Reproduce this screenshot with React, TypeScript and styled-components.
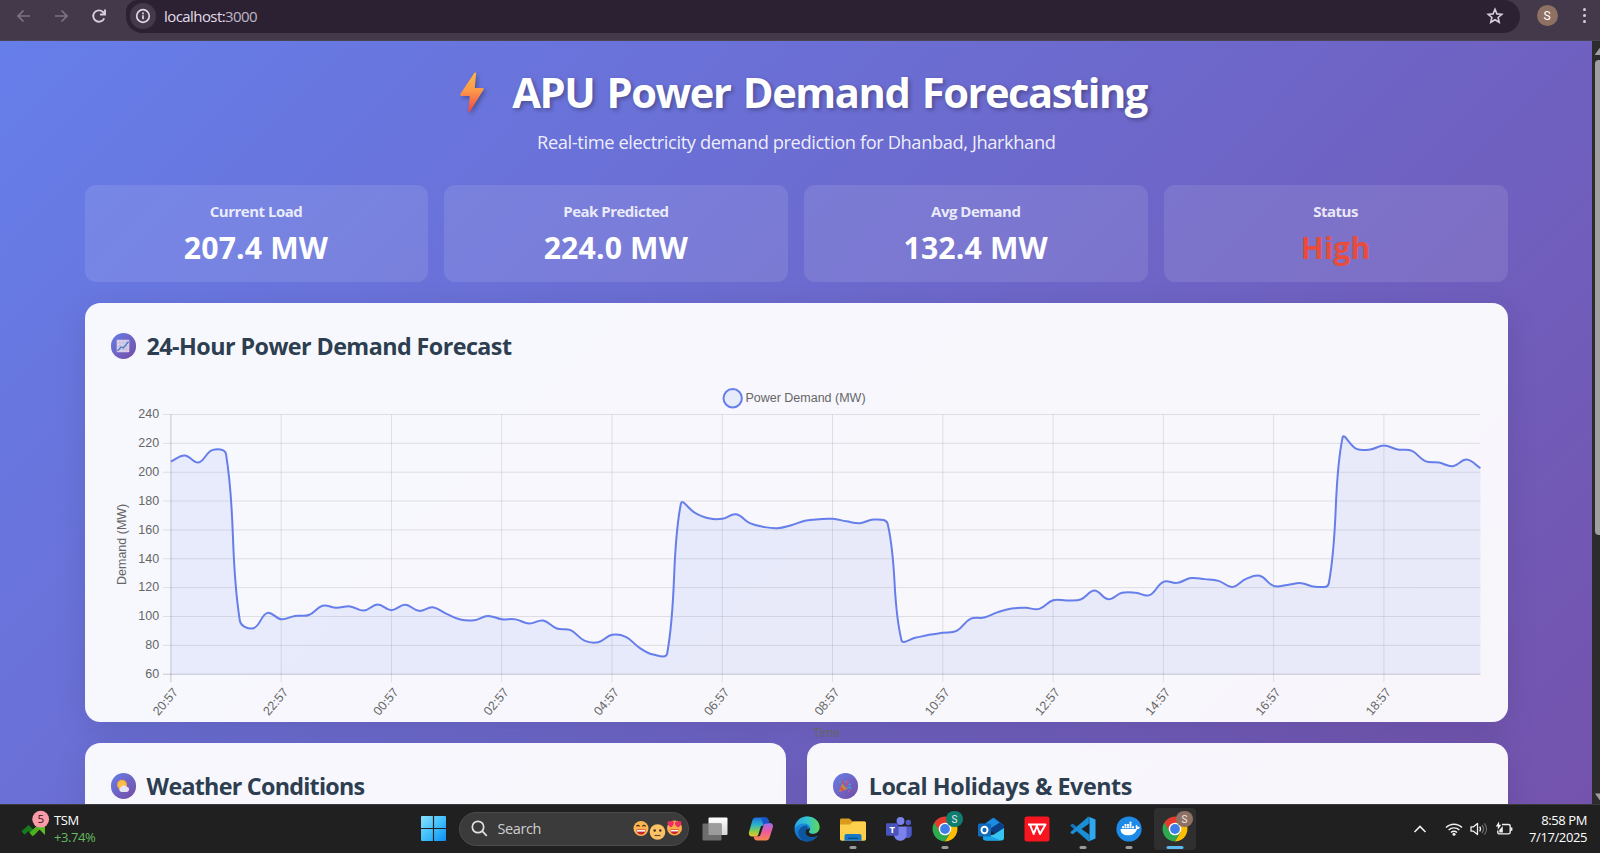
import React from "react";
import styled, { createGlobalStyle } from "styled-components";

const GlobalStyle = createGlobalStyle`
  *, *::before, *::after { box-sizing: border-box; }
  html, body { margin: 0; padding: 0; overflow: hidden; background: #202020; }
`;

const UI = `"Open Sans", "Noto Sans", sans-serif`;

const Screen = styled.div`
  width: 1600px;
  height: 853px;
  display: flex;
  flex-direction: column;
  overflow: hidden;
  font-family: ${UI};
`;

/* ---------- browser toolbar ---------- */

const Toolbar = styled.div`
  flex: none;
  height: 41px;
  display: flex;
  align-items: flex-start;
  background: #43394a;
  border-bottom: 1px solid #4b4552;
`;

const NavIcons = styled.div`
  width: 126px;
  height: 31px;
  padding-left: 13.5px;
  display: flex;
  align-items: center;
  gap: 17.5px;
`;

const AddressBar = styled.div`
  width: 1394px;
  height: 33px;
  padding: 0 15px 1px 4px;
  display: flex;
  align-items: center;
  background: #2b2133;
  border-radius: 12px 17px 17px 17px;
`;

const InfoBadge = styled.span`
  width: 26px;
  height: 26px;
  border-radius: 50%;
  display: grid;
  place-items: center;
  background: #43394a;
`;

const Url = styled.span`
  flex: 1;
  padding-left: 8px;
  font-size: 15px;
  letter-spacing: -0.57px;
  color: #e4dde8;
  span { color: #bfb6c4; }
`;

const Avatar = styled.span`
  width: 21px;
  height: 21px;
  margin: 5px 0 0 16.5px;
  border-radius: 50%;
  display: grid;
  place-items: center;
  background: #8f7164;
  color: #fff;
  font: 12px Roboto, sans-serif;
`;

const MenuDots = styled.span`
  margin: 8px 0 0 25px;
  display: flex;
  flex-direction: column;
  gap: 2.6px;
  i { width: 3.4px; height: 3.4px; border-radius: 50%; background: #d8ccdf; }
`;

/* ---------- page ---------- */

const Viewport = styled.div`
  flex: none;
  height: 762.5px;
  display: flex;
  overflow: hidden;
`;

const Page = styled.main`
  width: 1592px;
  height: 1180px;
  flex: none;
  padding: 0 84px 0 84.6px;
  background: linear-gradient(135deg, #667eea 0%, #764ba2 100%);
`;

const ScrollTrack = styled.div`
  flex: 1;
  padding: 6px 0 3px 3px;
  display: flex;
  flex-direction: column;
  background: #2c2c2c;
  overflow: hidden;
`;

const ScrollThumb = styled.div`
  width: 9px;
  height: 475px;
  margin: 5px 0 auto;
  border-radius: 4px;
  background: #9f9f9f;
`;

const Header = styled.header`
  height: 143.5px;
  padding-top: 22px;
  display: flex;
  flex-direction: column;
  align-items: center;
`;

const Title = styled.h1`
  margin: 0 0 0 14px;
  height: 57px;
  display: flex;
  align-items: center;
  gap: 28.5px;
  font-size: 41.67px;
  line-height: 57px;
  letter-spacing: -1.45px;
  word-spacing: 3px;
  font-weight: 700;
  color: #fff;
  white-space: nowrap;
  text-shadow: 2px 2px 4px rgba(0, 0, 0, 0.3);
  svg { margin-top: 2px; filter: drop-shadow(2px 2px 2px rgba(0, 0, 0, 0.3)); }
`;

const Subtitle = styled.p`
  margin: 9px 0 0;
  font-size: 18.3px;
  line-height: 25px;
  letter-spacing: -0.4px;
  color: rgba(255, 255, 255, 0.9);
  white-space: nowrap;
`;

const Stats = styled.section`
  display: grid;
  grid-template-columns: repeat(4, 1fr);
  gap: 16px;
`;

const StatCard = styled.div`
  height: 97.5px;
  padding: 15px 1px 0 0;
  border-radius: 11px;
  background: rgba(255, 255, 255, 0.1);
  text-align: center;
  white-space: nowrap;
`;

const StatLabel = styled.div`
  font-size: 15px;
  line-height: 22px;
  letter-spacing: -0.5px;
  font-weight: 700;
  color: rgba(255, 255, 255, 0.86);
`;

const StatValue = styled.div<{ $alert?: boolean }>`
  margin-top: 5px;
  font-size: 30.2px;
  line-height: 42px;
  letter-spacing: 0.15px;
  font-weight: 700;
  color: ${(p) => (p.$alert ? "#e74c3c" : "#fff")};
`;

const Card = styled.section<{ $height: number }>`
  height: ${(p) => p.$height}px;
  padding: 26px;
  border-radius: 15.5px;
  background: rgba(255, 255, 255, 0.95);
  box-shadow: 0 8px 32px rgba(0, 0, 0, 0.1);
`;

const ChartCard = styled(Card)`
  margin-top: 21px;
`;

const LowerRow = styled.div`
  margin-top: 21px;
  display: grid;
  grid-template-columns: 1fr 1fr;
  gap: 20.8px;
`;

const CardTitle = styled.h2<{ $tracking: number }>`
  margin: 0;
  height: 34px;
  display: flex;
  align-items: center;
  gap: 10.5px;
  font-size: 23.3px;
  line-height: 34px;
  letter-spacing: ${(p) => p.$tracking}px;
  font-weight: 700;
  color: #2c3e50;
  white-space: nowrap;
`;

const TitleIcon = styled.span`
  width: 25.5px;
  height: 25.5px;
  border-radius: 50%;
  display: grid;
  place-items: center;
  background: linear-gradient(135deg, #667eea, #764ba2);
`;

const ChartSvg = styled.svg`
  display: block;
  margin-left: -26px;
  overflow: visible;
  font-family: "Liberation Sans", Arial, sans-serif;
  font-size: 12.5px;
  fill: #666;
`;

/* ---------- chart ---------- */

const demand = [
  207.4, 211.6, 206.7, 215.3, 212.5, 97.2, 91.9, 102.5, 98.1, 100.4, 101, 107.4, 106, 107, 104.1, 108.3,
  104.4, 108.1, 103.9, 106.4, 101.8, 97.9, 97.4, 100.4, 98.1, 98, 95.1, 97.2, 91.7, 90.5, 83.3, 82.2,
  87.3, 85.9, 78.3, 73.6, 74.3, 178.3, 172, 168.1, 167.7, 170.9, 164.7, 162.1, 161.2, 163.3, 166.3, 167.4,
  167.7, 166, 164.7, 167.2, 164.2, 83.6, 85.2, 87.3, 88.7, 90, 98.4, 99.3, 103, 105.5, 106, 105.3,
  111.3, 111.1, 111.8, 118, 112, 116.4, 116.4, 114.8, 124, 123.3, 126.6, 125.9, 124.7, 120.5, 126.1, 128.2,
  121.2, 121.9, 123.1, 120.6, 122.9, 224, 216.2, 215.7, 218.5, 215.7, 215, 207.7, 206.7, 204.2, 208.8, 202.8,
];

const times = ["20:57", "22:57", "00:57", "02:57", "04:57", "06:57", "08:57", "10:57", "12:57", "14:57", "16:57", "18:57"];
const levels = [240, 220, 200, 180, 160, 140, 120, 100, 80, 60];

const plot = { left: 85.9, right: 1395.4, top: 51.5, bottom: 311.2 };
const step = (plot.right - plot.left) / (demand.length - 1);
const yOf = (v: number) => plot.top + ((240 - v) / 180) * (plot.bottom - plot.top);

function splinePath(values: number[], tension = 0.4) {
  const pts = values.map((v, i) => ({ x: plot.left + i * step, y: yOf(v) }));
  const ctrl = pts.map((p, i) => {
    const a = pts[Math.max(0, i - 1)];
    const b = pts[Math.min(pts.length - 1, i + 1)];
    const da = Math.hypot(p.x - a.x, p.y - a.y);
    const db = Math.hypot(b.x - p.x, b.y - p.y);
    const fa = (tension * da) / (da + db);
    const fb = (tension * db) / (da + db);
    return {
      inX: p.x - fa * (b.x - a.x),
      inY: p.y - fa * (b.y - a.y),
      outX: p.x + fb * (b.x - a.x),
      outY: p.y + fb * (b.y - a.y),
    };
  });
  return pts
    .map((p, i) =>
      i === 0
        ? `M${p.x},${p.y}`
        : `C${ctrl[i - 1].outX},${ctrl[i - 1].outY} ${ctrl[i].inX},${ctrl[i].inY} ${p.x},${p.y}`
    )
    .join(" ");
}

const DemandChart = () => {
  const line = splinePath(demand);
  return (
    <ChartSvg width="1423" height="350">
      <circle cx="647.7" cy="35.2" r="9.2" fill="#e6eafb" stroke="#667eea" strokeWidth="2" />
      <text x="660.4" y="39">Power Demand (MW)</text>
      {levels.map((v) => (
        <g key={v}>
          <line x1={plot.left - 8} x2={plot.right} y1={yOf(v)} y2={yOf(v)} stroke={v === 60 ? "rgba(0,0,0,.2)" : "rgba(0,0,0,.1)"} />
          <text x={plot.left - 11.8} y={yOf(v) + 3.8} textAnchor="end">{v}</text>
        </g>
      ))}
      {times.map((t, i) => {
        const x = plot.left + i * 8 * step;
        return (
          <g key={t}>
            <line x1={x} x2={x} y1={plot.top} y2={plot.bottom + 8} stroke={i === 0 ? "rgba(0,0,0,.2)" : "rgba(0,0,0,.1)"} />
            <text transform={`translate(${x + 7.7} ${plot.bottom + 18.2}) rotate(-50)`} textAnchor="end">{t}</text>
          </g>
        );
      })}
      <text transform={`translate(41.400 ${(plot.top + plot.bottom) / 2}) rotate(-90)`} textAnchor="middle">Demand (MW)</text>
      <path d={`${line} L${plot.right},${plot.bottom} L${plot.left},${plot.bottom} Z`} fill="rgba(102,126,234,.1)" />
      <path d={line} fill="none" stroke="#667eea" strokeWidth="2" strokeLinejoin="round" />
      <text x={(plot.left + plot.right) / 2 + 0.8} y="374" textAnchor="middle">Time</text>
    </ChartSvg>
  );
};

/* ---------- taskbar ---------- */

const Taskbar = styled.footer`
  flex: none;
  height: 49.5px;
  display: flex;
  align-items: center;
  background: #202020;
  border-top: 1px solid #3a3a3a;
  color: #fff;
`;

const StockWidget = styled.div`
  width: 412px;
  padding-left: 20px;
  display: flex;
  align-items: center;
  gap: 4px;
  svg { margin-top: -10px; }
`;

const StockText = styled.div`
  font-size: 13px;
  line-height: 16.7px;
  letter-spacing: -0.42px;
  white-space: nowrap;
  span { display: block; color: #62bd5c; }
`;

const StartButton = styled.div`
  width: 47px;
  display: grid;
  place-items: center;
  padding-right: 5px;
`;

const SearchBox = styled.div`
  width: 230px;
  height: 34px;
  padding: 0 5px 0 11px;
  display: flex;
  align-items: center;
  border: 1px solid #4b4b4b;
  border-radius: 17px;
  background: #3b3b3b;
  color: #cfcfcf;
  font-size: 14.5px;
  letter-spacing: -0.4px;
  svg:last-child { margin-left: auto; }
  span { padding-left: 9.5px; }
`;

const Apps = styled.div`
  display: flex;
  padding-left: 3px;
`;

const AppSlot = styled.div<{ $active?: boolean }>`
  position: relative;
  width: 42px;
  height: 42px;
  margin: 0 2.03px;
  border-radius: 4px;
  display: grid;
  place-items: center;
  background: ${(p) => (p.$active ? "#2f2f2f" : "transparent")};
`;

const RunMark = styled.i<{ $active?: boolean }>`
  position: absolute;
  left: 50%;
  bottom: 0.5px;
  width: ${(p) => (p.$active ? 17 : 7)}px;
  height: 3.4px;
  border-radius: 2px;
  transform: translateX(-50%);
  background: ${(p) => (p.$active ? "#5db8ee" : "#9a9a9a")};
`;

const ProfileBadge = styled.span<{ $color: string }>`
  position: absolute;
  top: 3px;
  right: 3.5px;
  width: 16.5px;
  height: 16.5px;
  border-radius: 50%;
  display: grid;
  place-items: center;
  background: ${(p) => p.$color};
  color: #e8e8e8;
  font: 10px Roboto, sans-serif;
`;

const Tray = styled.div`
  flex: 1;
  padding-right: 13px;
  display: flex;
  justify-content: flex-end;
  align-items: center;
`;

const TrayIcons = styled.div`
  display: flex;
  align-items: center;
  gap: 7px;
  padding-right: 16px;
  svg:first-child { margin-right: 11px; }
`;

const Clock = styled.div`
  width: 58px;
  font-size: 13px;
  line-height: 16.6px;
  letter-spacing: -0.4px;
  text-align: right;
  white-space: nowrap;
`;

const Icon = ({ children }: { children: React.ReactNode }) => (
  <svg width="26" height="26" viewBox="0 0 26 26">{children}</svg>
);

const TaskViewIcon = () => (
  <Icon>
    <defs><linearGradient id="tv" x2="0" y2="1"><stop stopColor="#fff" /><stop offset="1" stopColor="#d6d6d6" /></linearGradient></defs>
    <rect x="6.5" y="1.5" width="19" height="17.5" rx="1" fill="url(#tv)" />
    <rect x="0.5" y="7.5" width="19" height="17" rx="1" fill="#6d6d6d" />
    <rect x="6.5" y="7.5" width="13" height="11.5" fill="#9c9c9c" />
  </Icon>
);

const CopilotIcon = () => (
  <Icon>
    <defs>
      <linearGradient id="cpA" x2="0" y2="1"><stop stopColor="#1b6fe0" /><stop offset=".4" stopColor="#2fb5c8" /><stop offset=".75" stopColor="#8fce45" /><stop offset="1" stopColor="#f5c02c" /></linearGradient>
      <linearGradient id="cpB" x2="0" y2="1"><stop stopColor="#a06cf0" /><stop offset=".5" stopColor="#ee5a9c" /><stop offset="1" stopColor="#f7884c" /></linearGradient>
    </defs>
    <path d="M8 1.500h9.500c2 0 2.600 1.400 3.100 3.200l.8 2.800h-3.200c-1.500 0-2.300.8-2.700 2.200l-2.700 8.300c-.5 1.500-1.300 2.400-3 2.400H4c-2.600 0-3.600-2-3-4.500L4.300 4.500C4.900 2.500 6 1.500 8 1.500z" fill="url(#cpA)" />
    <path d="M18 24.500H9.200c-2 0-2.800-1-3.300-2.800l-.5-1.500h4.300c1.700 0 2.600-1 3.100-2.500L15.500 9c.4-1.200 1.200-2 2.700-2h3.600c2.600 0 3.600 2 3 4.500l-3.200 10c-.6 2-1.700 3-3.600 3z" fill="url(#cpB)" />
    <path d="M17 1.500c2.300 0 3 1.300 3.600 3.200l.8 2.800h-3.200c-1.400 0-2.200.7-2.600 1.900L13.500 2.800c-.3-.8-.8-1.300-1.500-1.300z" fill="#1c53c9" />
    <path d="M10.300 18.500 13 10l2.500-.5-3.200 9.500c-.3.700-.7 1-1.500 1.200H9c.6-.3 1-.9 1.300-1.700z" fill="#202020" />
  </Icon>
);

const EdgeIcon = () => (
  <Icon>
    <defs>
      <linearGradient id="edA" x2="1"><stop stopColor="#2aa4e8" /><stop offset=".55" stopColor="#35c6c9" /><stop offset="1" stopColor="#63d84f" /></linearGradient>
      <linearGradient id="edB" x2="0" y2="1"><stop stopColor="#1c9be8" /><stop offset="1" stopColor="#1366c2" /></linearGradient>
    </defs>
    <path d="M.5 13C.5 6 6 .5 13 .5S25.500 5 25.500 11c0 4-3 6.700-6.300 6.700-3 0-4.200-1-4.200-1.900 0-.8 1.200-1.200 1.200-3.200l-3 .2c-1.700 1-2.200 2.600-1.700 4.500.8 3 4 4.300 7.300 4 1.900-.1 3.600-.8 5-1.700C21.700 23.300 17.700 25.500 13 25.500 6 25.500.5 20 .5 13z" fill="url(#edB)" />
    <path d="M.6 12.200C1.200 5.500 6.500.5 13 .5c7 0 12.500 4.800 12.500 10.800 0 4-2.900 6.400-6.300 6.400-3 0-4.200-1-4.200-1.900 0-.8 1.200-1.200 1.200-3.200 0-2.700-2.500-5-6-5-4.200 0-7.700 1.800-9.600 4.600z" fill="url(#edA)" />
    <path d="M12 9.500c-4 .2-7.300 3-7.600 7 .1 4.600 4 9 8.600 9 4.700 0 8.500-2.200 10.800-5.700-1.400.9-3.100 1.600-5 1.700-3.300.3-6.500-1-7.300-4-.6-2.300.2-4 1.900-5 .6-1.400.2-2.800-1.400-3z" fill="#0d559f" />
  </Icon>
);

const FolderIcon = () => (
  <Icon>
    <path d="M0 4c0-1 .7-1.600 1.600-1.600h7c.8 0 1.200.3 1.700.8L12.500 5.500H24c1.200 0 2 .8 2 1.800V12H0z" fill="#d99a1d" />
    <path d="M0 8.500h9c1 0 1.400-.4 2-1l1.200-1.300c.4-.4.8-.7 1.500-.7H24.300c1 0 1.700.7 1.700 1.600V23c0 1-.7 1.700-1.700 1.700H1.700C.7 24.700 0 24 0 23z" fill="#fccf4d" />
    <path d="M4.500 24.700V20c0-1.200.8-2 2-2h13c1.200 0 2 .8 2 2v4.700z" fill="#1679c8" />
    <path d="M8 22.300h10" stroke="#0b4b8a" strokeWidth="1.300" />
  </Icon>
);

const TeamsIcon = () => (
  <Icon>
    <circle cx="22.300" cy="6.500" r="2.700" fill="#5059c9" />
    <circle cx="14.500" cy="5" r="3.900" fill="#7b83eb" />
    <path d="M19.500 10.500h6.200v7.200c0 2.500-1.600 4.300-4 4.300h-2.200z" fill="#5059c9" />
    <path d="M8 10.500h12.500v8c0 3.800-2.600 6.300-6.200 6.300S8 22.300 8 18.500z" fill="#7b83eb" />
    <rect x="0" y="7.300" width="12.500" height="12.500" rx="1.200" fill="#4b53bc" />
    <text x="6.200" y="17" textAnchor="middle" fill="#fff" fontSize="9.500" fontWeight="700" fontFamily="Open Sans">T</text>
  </Icon>
);

const ChromeIcon = () => (
  <Icon>
    <path d="M13 13 2.200 6.800A12.500 12.500 0 0 1 23.800 6.800H13z" fill="#e33b2e" />
    <path d="M13 13 2.200 6.750A12.500 12.500 0 0 0 13 25.500l5.400-9.400z" fill="#2da94f" />
    <path d="M13 25.500A12.500 12.500 0 0 0 23.800 6.750H13l5.400 9.400z" fill="#fdbd00" />
    <path d="M2.200 6.750 7.600 16.100 13 6.750z" fill="#e33b2e" />
    <path d="M7.600 16.100 2.200 6.750l-.6 3z" fill="#2da94f" />
    <circle cx="13" cy="13" r="6.300" fill="#fff" />
    <circle cx="13" cy="13" r="4.900" fill="#3f7de8" />
  </Icon>
);

const OutlookIcon = () => (
  <Icon>
    <path d="M4.500 9.500 14.500 2c.7-.5 1.300-.5 2 0l9.500 7.500V15H4.500z" fill="#1066b5" />
    <path d="M8 7 15.500 2l6 4.700-9.500 6z" fill="#1c8be0" />
    <path d="m12 13 9.500-6.300L26 10v3l-9 5.500z" fill="#0a3f86" />
    <path d="M26 12v10c0 1.500-1 2.500-2.500 2.500H8L5 20.500l11-2z" fill="#36c5f0" />
    <path d="m5 16.500 17.500 8H7c-1.300 0-2-.8-2-2z" fill="#1ba1e8" />
    <rect x="0" y="7.500" width="13" height="13" rx="1.500" fill="#0f6cbd" />
    <ellipse cx="6.500" cy="14" rx="3" ry="3.300" fill="none" stroke="#fff" strokeWidth="1.900" />
  </Icon>
);

const WpsIcon = () => (
  <Icon>
    <rect x=".5" y=".5" width="25" height="25" rx="2.500" fill="#f9151f" />
    <path d="M4 8.500h14.500M6 8.500l3.700 9.500L13 9.500M12.500 9l3.500 9 5.500-9.500H18.500" fill="none" stroke="#fff" strokeWidth="2" strokeLinejoin="round" />
  </Icon>
);

const CodeIcon = () => (
  <Icon>
    <path d="M19 .6 7.300 11.300 2.700 7.800.5 9v1l17.800 15.200z" fill="#1277bd" />
    <path d="M19 25.400 7.300 14.700l-4.600 3.500L.5 17v-1L18.300.8z" fill="#1b8fd6" />
    <path d="M18.300.4 25.500 3.500v19l-7.200 3.100c-.5 0-.8-.2-1-.5.8.7 2 .2 2-1V1.900c0-1.200-1.200-1.700-2-1z" fill="#2fa8f0" />
    <path d="M19.300 7.500v11L11.500 13z" fill="#202020" />
  </Icon>
);

const DockerIcon = () => (
  <Icon>
    <circle cx="13" cy="13" r="12.600" fill="#1d8ae8" />
    <path d="M4.500 13h14c.9 0 1.500-.4 1.500-1.300-.6-.8-.5-2 .2-3 .9.600 1.300 1.300 1.400 2.200.8-.1 1.600 0 2.300.5-.5 1.200-1.500 1.600-2.800 1.600-1.500 4.300-4.500 6.300-9 6.300-5 0-7.400-2.300-7.600-6.300z" fill="#fff" />
    <path d="M6 10.300h2v2H6zM8.500 10.300h2v2h-2zM11 10.300h2v2h-2zM13.500 10.300h2v2h-2zM16 10.300h2v2h-2zM8.500 8h2v2h-2zM11 8h2v2h-2zM13.500 8h2v2h-2zM13.500 5.700h2v2h-2z" fill="#fff" />
  </Icon>
);

const SearchEmojis = () => (
  <svg width="50" height="24" viewBox="0 0 50 24">
    <circle cx="8" cy="11.500" r="7.500" fill="#fdb64f" />
    <path d="M3.500 12.500h9c0 3.500-1.800 5-4.500 5s-4.500-1.500-4.500-5z" fill="#c5222f" />
    <path d="M4 13h8v1.600H4z" fill="#fff" />
    <path d="M3.500 9.500c.7-1.400 2.300-1.400 3 0M9.500 9.500c.7-1.400 2.300-1.400 3 0" fill="none" stroke="#4b2e1a" strokeWidth="1.200" />
    <circle cx="24.500" cy="15" r="7.800" fill="#fcc266" />
    <circle cx="21.700" cy="13.500" r="1.200" fill="#3f3028" /><circle cx="27.300" cy="13.500" r="1.200" fill="#3f3028" />
    <path d="M21.500 18.500h6" stroke="#6b4a32" strokeWidth="1.200" />
    <circle cx="41.500" cy="11" r="7.500" fill="#fdae4c" />
    <path d="M37.500 12.500h8c0 3-1.600 4.500-4 4.500s-4-1.500-4-4.500z" fill="#c5222f" />
    <path d="M38 13h7v1.400h-7z" fill="#fff" />
    <path d="M38 10.500c-3-1.700-4.300-4-3.300-5.700.8-1.200 2.300-1 2.900.2.900-1.200 2.500-1.200 3.100.1.600 1.900-.6 3.900-2.700 5.400zM45 10.500c-2.500-1.600-3.500-3.500-2.900-5.300.6-1.300 2.100-1.300 2.900-.1.800-1.300 2.500-1.400 3.200-.1.800 1.900-.6 4-3.200 5.500z" fill="#ee2d63" />
  </svg>
);

const apps: { key: string; icon: React.ReactNode; running?: boolean; active?: boolean; badge?: string }[] = [
  { key: "tasks", icon: <TaskViewIcon /> },
  { key: "copilot", icon: <CopilotIcon /> },
  { key: "edge", icon: <EdgeIcon /> },
  { key: "files", icon: <FolderIcon />, running: true },
  { key: "teams", icon: <TeamsIcon /> },
  { key: "chrome", icon: <ChromeIcon />, running: true, badge: "#0f7d70" },
  { key: "outlook", icon: <OutlookIcon /> },
  { key: "wps", icon: <WpsIcon /> },
  { key: "code", icon: <CodeIcon />, running: true },
  { key: "docker", icon: <DockerIcon />, running: true },
  { key: "chrome-active", icon: <ChromeIcon />, running: true, active: true, badge: "#8f7164" },
];

export default function App() {
  return (
    <Screen>
      <GlobalStyle />
      <Toolbar>
        <NavIcons>
          <svg width="20" height="20" viewBox="0 0 20 20" fill="none" stroke="#7d7385" strokeWidth="1.700"><path d="M16 10H4.500M9.500 4.500 4 10l5.500 5.500" /></svg>
          <svg width="20" height="20" viewBox="0 0 20 20" fill="none" stroke="#7d7385" strokeWidth="1.700"><path d="M4 10h11.500M10.500 4.500 16 10l-5.500 5.500" /></svg>
          <svg width="20" height="20" viewBox="0 0 20 20" fill="none" stroke="#d8ccdf" strokeWidth="1.900"><path d="M15.200 12.300A5.700 5.700 0 1 1 14 6l1.500 1.600" /><path d="M16 3.500v5h-5" /></svg>
        </NavIcons>
        <AddressBar>
          <InfoBadge>
            <svg width="16" height="16" viewBox="0 0 16 16" fill="none" stroke="#e0d6e6" strokeWidth="1.700"><circle cx="8" cy="8" r="6.300" /><path d="M8 7.200V11.300M8 4.600v1.700" /></svg>
          </InfoBadge>
          <Url>localhost:<span>3000</span></Url>
          <svg width="20" height="20" viewBox="0 0 20 20" fill="none" stroke="#d8ccdf" strokeWidth="1.600"><path d="m10 3.300 1.900 4.600 4.900.4-3.700 3.200 1.100 4.800L10 13.700l-4.200 2.600 1.100-4.800-3.700-3.200 4.900-.4z" /></svg>
        </AddressBar>
        <Avatar>S</Avatar>
        <MenuDots><i /><i /><i /></MenuDots>
      </Toolbar>

      <Viewport>
        <Page>
          <Header>
            <Title>
              <svg width="24" height="41" viewBox="0 0 24 41">
                <defs><linearGradient id="bolt" x2="0" y2="1"><stop stopColor="#fcb643" /><stop offset=".45" stopColor="#fb9a4a" /><stop offset="1" stopColor="#ef4444" /></linearGradient></defs>
                <path d="M14.500.8c.8-.8 1.800-.3 1.600.8L14.800 16h7.700c1.200 0 1.600.9 1 1.800L9.800 39.800c-.6.900-1.600.6-1.500-.5L9.800 24H1.300C.2 24-.2 23 .3 22.100z" fill="url(#bolt)" />
              </svg>
              APU Power Demand Forecasting
            </Title>
            <Subtitle>Real-time electricity demand prediction for Dhanbad, Jharkhand</Subtitle>
          </Header>

          <Stats>
            <StatCard><StatLabel>Current Load</StatLabel><StatValue>207.4 MW</StatValue></StatCard>
            <StatCard><StatLabel>Peak Predicted</StatLabel><StatValue>224.0 MW</StatValue></StatCard>
            <StatCard><StatLabel>Avg Demand</StatLabel><StatValue>132.4 MW</StatValue></StatCard>
            <StatCard><StatLabel>Status</StatLabel><StatValue $alert>High</StatValue></StatCard>
          </Stats>

          <ChartCard $height={418.9}>
            <CardTitle $tracking={-0.56}>
              <TitleIcon>
                <svg width="14" height="14" viewBox="0 0 14 14"><rect x=".7" y=".7" width="12.600" height="12.600" rx="1" fill="#dcd3ea" /><path d="M4 1v12M7.200 1v12M10.400 1v12M1 4h12M1 7.200h12M1 10.400h12" stroke="#bfb4dc" strokeWidth=".7" /><path d="m1.500 12 3.500-4 2.500 1L12.500 2.500" fill="none" stroke="#4a7fc4" strokeWidth="1.300" /></svg>
              </TitleIcon>
              24-Hour Power Demand Forecast
            </CardTitle>
            <DemandChart />
          </ChartCard>

          <LowerRow>
            <Card $height={300}>
              <CardTitle $tracking={-0.74}>
                <TitleIcon>
                  <svg width="14" height="14" viewBox="0 0 14 14"><circle cx="6" cy="5.800" r="5" fill="#f9a63a" /><circle cx="6" cy="5.800" r="3.700" fill="#fcbf4b" /><path d="M5.500 13a2.600 2.600 0 0 1-.3-5.100 3.200 3.200 0 0 1 5.600-.2A2.700 2.700 0 0 1 11 13z" fill="#e8e3f2" /></svg>
                </TitleIcon>
                Weather Conditions
              </CardTitle>
            </Card>
            <Card $height={300}>
              <CardTitle $tracking={-0.45}>
                <TitleIcon>
                  <svg width="14" height="14" viewBox="0 0 14 14"><path d="m1 13 3-8.500L9.500 10z" fill="#c58a3c" /><path d="m2 10.300 1-2.600 3.400 3.500-2 .7z" fill="#dd4a5b" /><path d="M5 5c1-1.500.5-2.800-.5-4M8 7c1-2.500 1-4 2.500-5.500" fill="none" stroke="#e0486c" strokeWidth="1.200" /><path d="M9 9c1.500-1 3-.5 4.300.5M7.500 3.500l.5-2" fill="none" stroke="#36a8e0" strokeWidth="1.200" /><circle cx="11.500" cy="5.500" r=".9" fill="#35b6e8" /><circle cx="2" cy="3" r=".8" fill="#44b977" /><circle cx="11" cy="12" r=".8" fill="#e8558c" /></svg>
                </TitleIcon>
                Local Holidays &amp; Events
              </CardTitle>
            </Card>
          </LowerRow>
        </Page>
        <ScrollTrack>
          <svg width="9" height="8" viewBox="0 0 9 8"><path d="M0 7.500 5 .5 9 6v2H0z" fill="#9f9f9f" /></svg>
          <ScrollThumb />
          <svg width="9" height="8" viewBox="0 0 9 8"><path d="M0 .5h9L5 7.500z" fill="#9f9f9f" /></svg>
        </ScrollTrack>
      </Viewport>

      <Taskbar>
        <StockWidget>
          <svg width="30" height="34" viewBox="0 0 30 34">
            <path d="m3 26 5.500-5 5.500 5.500" fill="none" stroke="#177a1d" strokeWidth="4.500" />
            <path d="m11 27.500 9-8.500M12.500 24l3 2.800" fill="none" stroke="#4db01f" strokeWidth="4.500" />
            <path d="M14 17h11v11z" fill="#5fbb22" />
            <circle cx="20.700" cy="12.200" r="8.400" fill="#fb9aa8" />
            <text x="20.700" y="16.400" textAnchor="middle" fontSize="11.500" fontFamily="Open Sans" fill="#2b1519">5</text>
          </svg>
          <StockText>TSM<span>+3.74%</span></StockText>
        </StockWidget>
        <StartButton>
          <svg width="25" height="25" viewBox="0 0 25 25">
            <defs><linearGradient id="win" x2="1" y2="1"><stop stopColor="#8be0ff" /><stop offset=".55" stopColor="#3cbcfb" /><stop offset="1" stopColor="#0c8cf2" /></linearGradient></defs>
            <path d="M0 1a1 1 0 0 1 1-1h10.900v11.900H0zM13.100 0H24a1 1 0 0 1 1 1v10.900H13.100zM0 13.100h11.900V25H1a1 1 0 0 1-1-1zM13.100 13.100H25V24a1 1 0 0 1-1 1H13.100z" fill="url(#win)" />
          </svg>
        </StartButton>
        <SearchBox>
          <svg width="17" height="17" viewBox="0 0 17 17" fill="none" stroke="#e2e2e2" strokeWidth="1.700"><circle cx="7" cy="7" r="5.700" /><path d="m11.200 11.200 4.600 4.600" /></svg>
          <span>Search</span>
          <SearchEmojis />
        </SearchBox>
        <Apps>
          {apps.map((a) => (
            <AppSlot key={a.key} $active={a.active}>
              {a.icon}
              {a.badge && <ProfileBadge $color={a.badge}>S</ProfileBadge>}
              {a.running && <RunMark $active={a.active} />}
            </AppSlot>
          ))}
        </Apps>
        <Tray>
          <TrayIcons>
            <svg width="14" height="10" viewBox="0 0 14 10" fill="none" stroke="#f0f0f0" strokeWidth="1.600"><path d="m1.500 8 5.500-5.500L12.500 8" /></svg>
            <svg width="18" height="14" viewBox="0 0 18 14" fill="none" stroke="#f0f0f0" strokeWidth="1.400"><path d="M1 5.500a11.300 11.300 0 0 1 16 0M3.600 8.100a7.600 7.600 0 0 1 10.800 0M6 10.500a4.200 4.200 0 0 1 6 0" /><circle cx="9" cy="12.200" r="1.500" fill="#f0f0f0" stroke="none" /></svg>
            <svg width="18" height="14" viewBox="0 0 18 14" fill="none" stroke="#f0f0f0" strokeWidth="1.300"><path d="M1 4.800h2.500L7.500 1.500v11L3.500 9.200H1z" strokeLinejoin="round" /><path d="M9.700 4.700c1 1.400 1 3.200 0 4.600" /><path d="M12 3c1.900 2.400 1.900 5.600 0 8M14.300 1.300c2.900 3.400 2.900 8 0 11.400" stroke="#6b6b6b" /></svg>
            <svg width="18" height="16" viewBox="0 0 18 16" fill="none" stroke="#f0f0f0" strokeWidth="1.400"><path d="M7 3.500h6.500c1 0 1.700.7 1.700 1.700v6c0 1-.7 1.700-1.700 1.700h-9c-1 0-1.700-.7-1.700-1.700V9.500" /><path d="M16.500 6.500v3.300" strokeWidth="1.800" /><path d="M4.300 11.500V9l3.500-4v6.500zM4 .5.8 5.500h2v3.300L6.300 3.700H4.200z" fill="#f0f0f0" stroke="none" /></svg>
          </TrayIcons>
          <Clock>8:58 PM<br />7/17/2025</Clock>
        </Tray>
      </Taskbar>
    </Screen>
  );
}
